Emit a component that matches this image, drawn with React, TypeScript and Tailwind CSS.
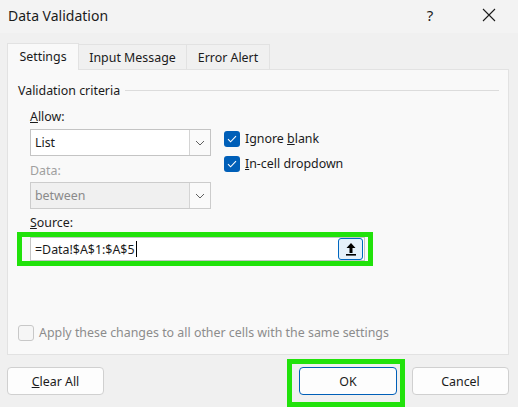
import React from "react";

const Chevron = () => (
    <svg width="10" height="6" viewBox="0 0 10 6" fill="none">
        <path d="M1 1l4 4 4-4" stroke="#606060" strokeWidth="1" />
    </svg>
);

const Check = ({ checked }: { checked: boolean }) =>
    checked ? (
        <span className="w-4 h-4 rounded-[3px] bg-[#005fb8] flex items-center justify-center">
            <svg width="10" height="8" viewBox="0 0 10 8" fill="none">
                <path d="M1 4.2l2.6 2.6L9 1.2" stroke="#ffffff" strokeWidth="1.1" />
            </svg>
        </span>
    ) : (
        <span className="w-4 h-4 rounded-[3px] border border-[#c8c8c8] bg-[#f6f6f6]" />
    );

function Select({ value, disabled }: { value: string; disabled?: boolean }) {
    return (
        <div
            className={`w-[181px] h-[27px] flex border ${
                disabled ? "bg-[#f0f0f0] border-[#cccccc] text-[#8a8a8a]" : "bg-white border-[#c4c4c4] text-[#1b1b1b]"
            }`}
        >
            <span className="flex-1 pl-[4px] leading-[25px]">{value}</span>
            <span className="w-[21px] border-l border-[#d4d4d4] bg-[#fafafa] flex items-center justify-center">
                <Chevron />
            </span>
        </div>
    );
}

export default function App() {
    return (
        <div className="w-[518px] h-[407px] bg-[#f0f0f0] relative overflow-hidden text-[12.4px] leading-[17px] text-[#1b1b1b] font-['Noto_Sans',sans-serif]">
            {/* title bar */}
            <div className="h-[33px] bg-[#f3f3f3] flex items-center pb-[3px]">
                <span className="pl-[8px] text-[14px] flex-1">Data Validation</span>
                <span className="w-[20px] text-center text-[15px] mr-[42px]">?</span>
                <svg className="mr-[22px]" width="14" height="14" viewBox="0 0 14 14" fill="none">
                    <path d="M1 1l12 12M13 1L1 13" stroke="#1b1b1b" strokeWidth="1.1" />
                </svg>
            </div>

            {/* tabs */}
            <div className="flex items-end pl-[7px] mt-[10px] h-[26px]">
                <div className="w-[72px] h-[27px] bg-[#f9f9f9] border border-b-0 border-[#e2e2e2] flex items-center justify-center relative z-10 -mb-px pb-[2px]">
                    Settings
                </div>
                <div className="w-[108px] h-[25px] border border-l-0 border-b-0 border-[#e2e2e2] flex items-center justify-center">
                    Input Message
                </div>
                <div className="w-[83px] h-[25px] border border-l-0 border-b-0 border-[#e2e2e2] flex items-center justify-center">
                    Error Alert
                </div>
            </div>

            {/* panel */}
            <div className="ml-[7px] w-[502px] h-[286px] bg-[#f9f9f9] border border-[#e2e2e2] relative">
                <div className="flex items-center h-[17px] pl-[10px] pr-[9px] mt-[12px]">
                    <span>Validation criteria</span>
                    <span className="flex-1 h-px bg-[#dcdcdc] ml-[5px]" />
                </div>

                <div className="flex pl-[22px] mt-[9px]">
                    <div className="flex flex-col">
                        <span className="h-[17px]">
                            <u>A</u>llow:
                        </span>
                        <div className="mt-[4px]">
                            <Select value="List" />
                        </div>
                        <span className="mt-[6px] h-[17px] text-[#a0a0a0]">Data:</span>
                        <div className="mt-[3px]">
                            <Select value="between" disabled />
                        </div>
                        <span className="mt-[5px] h-[17px]">
                            <u>S</u>ource:
                        </span>
                    </div>
                    <div className="flex flex-col gap-[9px] ml-[13px] mt-[23px]">
                        <label className="flex items-center gap-[5px] h-4 leading-[16px]">
                            <Check checked />
                            <span>
                                Ignore <u>b</u>lank
                            </span>
                        </label>
                        <label className="flex items-center gap-[5px] h-4 leading-[16px]">
                            <Check checked />
                            <span>
                                <u>I</u>n-cell dropdown
                            </span>
                        </label>
                    </div>
                </div>

                <div className="ml-[22px] mt-[6px] w-[335px] h-[24px] bg-white border border-[#c4c4c4] flex items-center">
                    <span className="pl-[4px]">=Data!$A$1:$A$5</span>
                    <span className="w-px h-[16px] bg-black ml-[1px]" />
                    <span className="flex-1" />
                    <span className="w-[25px] h-[22px] rounded-[3px] border border-[#0067c0] bg-[#e5f1fb] flex items-center justify-center mr-[1px]">
                        <svg width="12" height="14" viewBox="0 0 12 14" fill="#000">
                            <path d="M6 1L1.5 6h3v5h3V6h3z" />
                            <rect x="1" y="12" width="10" height="1.6" />
                        </svg>
                    </span>
                </div>

                <label className="flex items-center gap-[5px] h-4 leading-[16px] ml-[10px] mt-[64px] text-[#8c8c8c]">
                    <Check checked={false} />
                    <span>Apply these changes to all other cells with the same settings</span>
                </label>

                {/* highlight over source box */}
                <div className="absolute left-[9px] top-[162px] w-[356px] h-[34px] border-[5px] border-[#21e20b]" />
            </div>

            {/* buttons */}
            <div className="flex mt-[12px] pl-[7px]">
                <button className="w-[97px] h-[28px] bg-[#fdfdfd] border border-[#d0d0d0] rounded-[4px]">
                    <u>C</u>lear All
                </button>
                <span className="flex-1" />
                <button className="w-[98px] h-[28px] bg-[#fdfdfd] border border-[#005fb8] rounded-[4px] relative">
                    OK
                    <span className="absolute -left-[13px] -top-[9px] w-[118px] h-[48px] border-[5px] border-[#21e20b]" />
                </button>
                <button className="w-[97px] h-[28px] bg-[#fdfdfd] border border-[#d0d0d0] rounded-[4px] ml-[15px] mr-[9px]">
                    Cancel
                </button>
            </div>
        </div>
    );
}
